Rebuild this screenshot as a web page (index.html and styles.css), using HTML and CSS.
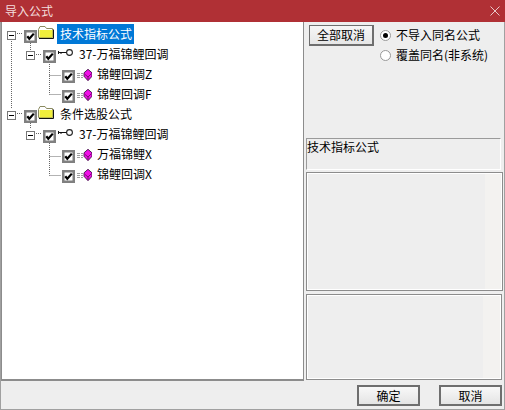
FILE: index.html
```html
<!DOCTYPE html>
<html lang="zh">
<head>
<meta charset="utf-8">
<title>导入公式</title>
<link rel="stylesheet" href="styles.css">
</head>
<body>
<svg class="defs" width="0" height="0" aria-hidden="true">
  <defs>
    <symbol id="exp" viewBox="0 0 9 9">
      <rect x="0.500" y="0.500" width="8" height="8" fill="#fff" stroke="#777"/>
      <path d="M2 4.500h5" stroke="#000"/>
    </symbol>
    <symbol id="chk" viewBox="0 0 13 13">
      <rect x="1.250" y="1.250" width="10.500" height="10.500" fill="#fff" stroke="#808080" stroke-width="2.500"/>
      <path d="M3.300 6.300 5.300 8.800 9.800 3.600" fill="none" stroke="#000" stroke-width="2.200"/>
    </symbol>
    <symbol id="folder" viewBox="0 0 16 13">
      <path d="M0.500 3.500 2 0.500h5L8.500 2.500h6v9h-14z" fill="#fff" stroke="#8a8a60"/>
      <path d="M1.500 4h13v7.500h-13z" fill="#f0ee3c"/>
      <path d="M1 12.500h14.500v-9" fill="none" stroke="#111"/>
    </symbol>
    <symbol id="key" viewBox="0 0 15 8">
      <circle cx="11.500" cy="3.500" r="2.900" fill="#fff" stroke="#222" stroke-width="1.100"/>
      <path d="M8.500 3.500H1M0.500 2v3M3 3.500v1.500" fill="none" stroke="#111"/>
    </symbol>
    <symbol id="gem" viewBox="0 0 15 12">
      <path d="M0 4.500h6M0 6.500h6M0 8.500h6" stroke="#a0a0a0" stroke-dasharray="3 1"/>
      <path d="M11 0.300 15 3.800V7.300L11 11.700 7 7.300V3.800z" fill="#f010e8" stroke="#401848" stroke-width="0.900"/>
      <path d="M7.500 5 11 8l3.500-3.500M11 8v3" fill="none" stroke="#800a78"/>
    </symbol>
  </defs>
</svg>
<div class="window">
  <header class="titlebar">
    <span class="title">导入公式</span>
    <svg class="close" width="10" height="10" viewBox="0 0 10 10"><path d="M0.500 0.500l9 9M9.500 0.500l-9 9" stroke="#e8c8c8" fill="none"/></svg>
  </header>
  <main class="body">
    <section class="tree">
      <svg class="lines" width="100" height="170" viewBox="0 0 100 170">
        <path d="M9.500 17v70M15 11.500h6M28.500 21v7M34 32.500h6M47.500 38v34.500M47.500 53.500h11M47.500 72.500h11" class="dots"/>
        <path d="M15 91.500h6M28.500 101v5M34 111.500h6M47.500 117v36.500M47.500 134.500h11M47.500 153.500h11" class="dots"/>
      </svg>
      <div class="row l0"><svg class="exp"><use href="#exp"/></svg><svg class="chk"><use href="#chk"/></svg><svg class="ic-folder"><use href="#folder"/></svg><span class="label selected">技术指标公式</span></div>
      <div class="row l1"><svg class="exp"><use href="#exp"/></svg><svg class="chk"><use href="#chk"/></svg><svg class="ic-key"><use href="#key"/></svg><span class="label">37-万福锦鲤回调</span></div>
      <div class="row l2"><svg class="chk"><use href="#chk"/></svg><svg class="ic-gem"><use href="#gem"/></svg><span class="label">锦鲤回调Z</span></div>
      <div class="row l2"><svg class="chk"><use href="#chk"/></svg><svg class="ic-gem"><use href="#gem"/></svg><span class="label">锦鲤回调F</span></div>
      <div class="row l0"><svg class="exp"><use href="#exp"/></svg><svg class="chk"><use href="#chk"/></svg><svg class="ic-folder"><use href="#folder"/></svg><span class="label">条件选股公式</span></div>
      <div class="row l1"><svg class="exp"><use href="#exp"/></svg><svg class="chk"><use href="#chk"/></svg><svg class="ic-key"><use href="#key"/></svg><span class="label">37-万福锦鲤回调</span></div>
      <div class="row l2"><svg class="chk"><use href="#chk"/></svg><svg class="ic-gem"><use href="#gem"/></svg><span class="label">万福锦鲤X</span></div>
      <div class="row l2"><svg class="chk"><use href="#chk"/></svg><svg class="ic-gem"><use href="#gem"/></svg><span class="label">锦鲤回调X</span></div>
    </section>
    <aside class="side">
      <div class="top">
        <button class="btn btn-all" type="button">全部取消</button>
        <div class="radios">
          <label class="radio"><span class="dot on"></span>不导入同名公式</label>
          <label class="radio"><span class="dot"></span>覆盖同名(非系统)</label>
        </div>
      </div>
      <div class="info">技术指标公式</div>
      <div class="pane pane-mid"></div>
      <div class="pane pane-low"></div>
    </aside>
  </main>
  <footer class="foot">
    <button class="btn btn-foot" type="button">确定</button>
    <button class="btn btn-foot" type="button">取消</button>
  </footer>
</div>
</body>
</html>
```
FILE: styles.css
```css
* { box-sizing: border-box; }
html, body { margin: 0; padding: 0; }
body {
  width: 505px;
  height: 410px;
  overflow: hidden;
  font: 12px/16px "Noto Sans CJK SC", "Liberation Sans", sans-serif;
  color: #000;
}
.defs { position: absolute; }
.window {
  width: 505px;
  height: 410px;
  display: flex;
  flex-direction: column;
  background: #eeeeee;
  border: 1px solid #a0a0a0;
  border-top: 0;
}
.titlebar {
  height: 22px;
  margin: 0 -1px;
  flex: none;
  background: #b03035;
  color: #f3dede;
  display: flex;
  align-items: center;
  justify-content: space-between;
  padding: 0 5px;
}
.body {
  flex: none;
  height: 359px;
  display: flex;
}
.tree {
  position: relative;
  width: 303px;
  flex: none;
  background: #fff;
  border: solid #8c8c8c;
  border-width: 0 1px 2px 1px;
  padding-top: 4px;
}
.lines { position: absolute; left: 0; top: 0; }
.dots { fill: none; stroke: #666; stroke-dasharray: 1 1; }
.row {
  position: relative;
  height: 20px;
  display: flex;
  align-items: flex-start;
}
.l0 { padding-left: 5px; }
.l1 { padding-left: 24px; }
.l2 { padding-left: 60px; }
.exp { width: 9px; height: 9px; flex: none; margin: 5px 8px 0 0; }
.chk { width: 13px; height: 13px; flex: none; margin-top: 4px; }
.ic-folder { width: 16px; height: 13px; flex: none; margin-left: 1px; }
.ic-key { width: 15px; height: 8px; flex: none; margin: 3px 0 0 2px; }
.ic-gem { width: 15px; height: 12px; flex: none; margin: 3px 0 0 2px; }
.label { white-space: nowrap; margin-left: 5px; }
.l1 .label { margin-left: 6px; }
.l0 .label { margin: -2px 0 0 3px; padding: 2px 2px 2px 3px; }
.selected { background: #0078d7; color: #fff; }
.side {
  flex: 1;
  min-width: 0;
  padding-left: 2px;
  display: flex;
  flex-direction: column;
}
.top {
  height: 116px;
  flex: none;
  display: flex;
  padding: 3px 0 0 3px;
}
.btn {
  font: inherit;
  color: #000;
  padding: 0;
  background: linear-gradient(#f6f6f6, #e6e6e6);
  border: 2px solid #6e6e6e;
  border-top-width: 1px;
  border-left-width: 1px;
}
.btn-all { width: 65px; height: 21px; flex: none; }
.radios {
  margin-left: 6px;
  display: flex;
  flex-direction: column;
  gap: 4px;
  padding-top: 2px;
}
.radio { display: flex; align-items: center; height: 16px; white-space: nowrap; }
.dot {
  position: relative;
  width: 11px;
  height: 11px;
  flex: none;
  margin-right: 5px;
  border-radius: 50%;
  background: #fff;
  border: 1px solid #999;
}
.dot.on::after {
  content: "";
  position: absolute;
  left: 2px;
  top: 2px;
  width: 5px;
  height: 5px;
  border-radius: 50%;
  background: #000;
}
.info {
  width: 195px;
  height: 32px;
  flex: none;
  border: 1px solid #fff;
  border-top-color: #9a9a9a;
  border-left-color: #9a9a9a;
  background: #eeeeee;
}
.pane {
  flex: none;
  border: 1px solid #8c8c8c;
  box-shadow: inset 1px 1px 0 #fff, inset -1px -1px 0 #fff;
}
.pane-mid {
  width: 197px;
  height: 119px;
  margin-top: 2px;
  background: linear-gradient(90deg, #eeeeee 178px, #f3f2f0 178px);
}
.pane-low {
  width: 196px;
  height: 86px;
  margin-top: 3px;
  background: linear-gradient(90deg, #eeeeee 176px, #f3f2f0 176px);
}
.foot {
  flex: 1;
  display: flex;
  justify-content: flex-end;
  gap: 19px;
  padding: 4px 2px 0 0;
}
.btn-foot { width: 63px; height: 21px; border-width: 2px; background: linear-gradient(#f8f8f8, #e4e4e4); }
```
